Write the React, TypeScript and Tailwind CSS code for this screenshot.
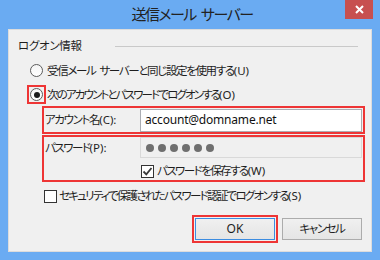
import React from "react";

// Windows 8 style "送信メール サーバー" dialog
const jp = "font-['Noto_Sans','Noto_Sans_CJK_JP',sans-serif] [font-feature-settings:'palt']";

function Radio({ checked }: { checked?: boolean }) {
  return (
    <span className="flex h-[13px] w-[13px] items-center justify-center rounded-full border border-[#5c5c5c] bg-gradient-to-b from-[#f4f4f4] to-white">
      {checked && <span className="h-[6px] w-[6px] rounded-full bg-[#1a1a1a]" />}
    </span>
  );
}

function Checkbox({ checked }: { checked?: boolean }) {
  return (
    <span className="flex h-[13px] w-[13px] items-center justify-center border border-[#333] bg-white">
      {checked && (
        <svg width="11" height="11" viewBox="0 0 11 11">
          <path d="M1.5 5.5 L4.3 8.3 L9.5 2" fill="none" stroke="#3a3a3a" strokeWidth="1.8" />
        </svg>
      )}
    </span>
  );
}

function Dot() {
  return <span className="h-[8px] w-[8px] rounded-full bg-[#6f6f6f]" />;
}

// label: condensed Japanese part + normal-width accelerator part
function Label({ jpText, en, cls }: { jpText: string; en: string; cls: string }) {
  return (
    <span className="whitespace-nowrap">
      <span className={cls}>{jpText}</span>
      <span className="tracking-normal">{en}</span>
    </span>
  );
}

export default function App() {
  return (
    <div className={`flex h-[260px] w-[380px] flex-col bg-[#6aabf2] text-[11.5px] text-[#1e1e1e] ${jp}`}>
      {/* title bar */}
      <div className="relative flex h-[29px] shrink-0 items-center justify-center">
        <span className="ml-[4px] text-[15px] text-[#222]">
          <span className="tracking-[-1.5px]">送信メール</span>
          <span className="ml-[5px] tracking-[-1.5px]">サーバー</span>
        </span>
        <div className="absolute right-[7px] top-0 flex h-[19px] w-[28px] items-center justify-center bg-[#c75050]">
          <svg width="9" height="9" viewBox="0 0 9 9">
            <path d="M1 1 L8 8 M8 1 L1 8" stroke="white" strokeWidth="2" />
          </svg>
        </div>
      </div>

      {/* client area */}
      <div className="mx-[8px] mb-[8px] flex flex-1 flex-col border border-[#dcdcdc] bg-[#f0f0f0]">
        {/* group header */}
        <div className="ml-[9px] mr-[13px] mt-[8px] flex h-[16px] items-center">
          <span className="w-[97px] shrink-0 tracking-[-0.3px]">ログオン情報</span>
          <span className="flex-1 border-t border-[#c9c9c9]" />
        </div>

        {/* radio 1 */}
        <div className="ml-[18px] mt-[7px] flex h-[19px] items-center">
          <span className="flex h-[19px] w-[19px] items-center justify-center border-2 border-transparent">
            <Radio />
          </span>
          <span className="ml-[1px] whitespace-nowrap">
            <span className="tracking-[-1.35px]">受信メール</span>
            <span className="ml-[4px] tracking-[-1.35px]">サーバーと同じ設定を使用する</span>
            <span className="tracking-normal">(U)</span>
          </span>
        </div>

        {/* radio 2 */}
        <div className="ml-[18px] mt-[5px] flex h-[19px] items-center">
          <span className="flex h-[19px] w-[19px] items-center justify-center border-2 border-[#ee3535]">
            <Radio checked />
          </span>
          <span className="ml-[1px]">
            <Label jpText="次のアカウントとパスワードでログオンする" en="(O)" cls="tracking-[-1.85px]" />
          </span>
        </div>

        {/* account */}
        <div className="ml-[33px] mr-[6px] mt-[2px] flex h-[28px] items-center border-2 border-[#ee3535] pr-[1px]">
          <span className="w-[96px] shrink-0 pl-[1px]">
            <Label jpText="アカウント名" en="(C):" cls="tracking-[-1.35px]" />
          </span>
          <div className="flex h-[23px] flex-1 items-center border border-[#abadb3] bg-white pl-[4px] text-[12px] tracking-[-0.2px] text-[#111]">
            account@domname.net
          </div>
        </div>

        {/* password */}
        <div className="ml-[33px] mr-[6px] mt-[1px] flex h-[47px] flex-col border-2 border-[#ee3535] pr-[1px]">
          <div className="flex h-[21px] items-center">
            <span className="w-[96px] shrink-0 pl-[1px]">
              <Label jpText="パスワード" en="(P):" cls="tracking-[-1.45px]" />
            </span>
            <div className="flex h-[21px] flex-1 items-center gap-[4px] border border-[#d9d9d9] bg-[#f0f0f0] pl-[5px]">
              <Dot />
              <Dot />
              <Dot />
              <Dot />
              <Dot />
              <Dot />
            </div>
          </div>
          <div className="ml-[97px] mt-[6px] flex h-[14px] items-center gap-[3px]">
            <Checkbox checked />
            <Label jpText="パスワードを保存する" en="(W)" cls="tracking-[-1.55px]" />
          </div>
        </div>

        {/* secure auth */}
        <div className="ml-[35px] mt-[6px] flex h-[16px] items-center gap-[2px]">
          <Checkbox />
          <Label jpText="セキュリティで保護されたパスワード認証でログオンする" en="(S)" cls="tracking-[-1.75px]" />
        </div>

        {/* buttons */}
        <div className="mr-[9px] mt-[11px] flex justify-end gap-[4px]">
          <div className="border-2 border-[#ee3535] p-[1px]">
            <button className="flex h-[22px] w-[80px] items-center justify-center border border-[#3c8ce0] bg-gradient-to-b from-[#f0f0f0] to-[#e5e5e5] text-[12px] text-[#1e1e1e]">
              OK
            </button>
          </div>
          <div className="py-[3px]">
            <button className="flex h-[22px] w-[80px] items-center justify-center border border-[#acacac] bg-gradient-to-b from-[#f0f0f0] to-[#e5e5e5] tracking-[-1.4px] text-[#1e1e1e]">
              キャンセル
            </button>
          </div>
        </div>
      </div>
    </div>
  );
}
